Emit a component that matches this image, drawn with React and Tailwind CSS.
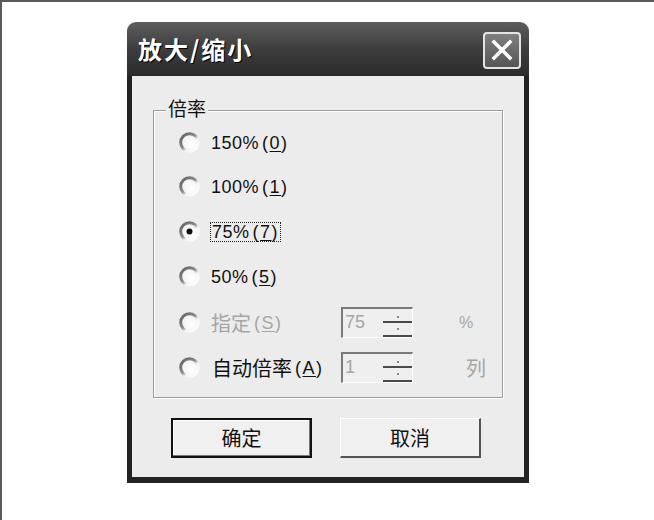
import React from 'react'

const cjk = { fontFamily: '"Noto Sans CJK SC", "Liberation Sans", sans-serif' }
const lat = { fontFamily: '"Liberation Sans", "Noto Sans CJK SC", sans-serif' }

function Radio({ checked }) {
  return (
    <svg width="21" height="21" viewBox="0 0 21 21" className="shrink-0">
      <defs>
        <linearGradient id="rg" x1="0" y1="0" x2="1" y2="1">
          <stop offset="0" stopColor="#5f5f5f" />
          <stop offset="0.45" stopColor="#8a8a8a" />
          <stop offset="0.62" stopColor="#f4f4f4" />
          <stop offset="1" stopColor="#ffffff" />
        </linearGradient>
        <radialGradient id="rf" cx="0.6" cy="0.6" r="0.6">
          <stop offset="0" stopColor="#ffffff" />
          <stop offset="1" stopColor="#f1f1f1" />
        </radialGradient>
      </defs>
      <circle cx="10.5" cy="10.5" r="8.8" fill="url(#rf)" stroke="url(#rg)" strokeWidth="3" />
      {checked && <circle cx="10.5" cy="10.5" r="3" fill="#111" />}
    </svg>
  )
}

function Label({ zh, key1, num, disabled, focus }) {
  const color = disabled ? 'text-[#a6a6a6]' : 'text-[#111]'
  return (
    <span className={`flex items-center ${color} ${focus ? 'outline outline-1 outline-dotted outline-[#222] px-[1px]' : ''}`}>
      {zh && <span style={cjk} className="text-[20px] leading-none">{zh}</span>}
      {num && <span style={lat} className="text-[18px] leading-none tracking-[0.5px]">{num}</span>}
      <span style={lat} className="text-[18px] leading-none ml-[3px] tracking-[1.5px]">
        (<span className="underline underline-offset-2">{key1}</span>)
      </span>
    </span>
  )
}

function Spin({ value }) {
  return (
    <div className="flex w-[72px] h-[31px] border-t-2 border-l-2 border-[#7a7a7a] border-b border-r border-b-white border-r-white bg-[#efefef]">
      <span style={lat} className="flex-1 text-[18px] text-[#a6a6a6] leading-[27px] pl-[2px]">{value}</span>
      <div className="w-[29px] flex flex-col border-b-2 border-[#4a4a4a]">
        <div className="flex-1 flex items-center justify-center border-b-2 border-[#4a4a4a]">
          <span className="w-[2px] h-[2px] bg-[#888] mt-1" />
        </div>
        <div className="flex-1 flex items-center justify-center">
          <span className="w-[2px] h-[2px] bg-[#888]" />
        </div>
      </div>
    </div>
  )
}

export default function App() {
  return (
    <div className="w-[654px] h-[520px] bg-white border-t-2 border-l-2 border-[#5a5a5a] overflow-hidden">
      <div className="ml-[125px] mt-[20px] w-[402px] flex flex-col">
        <div className="h-[54px] rounded-t-[9px] bg-gradient-to-b from-[#5e5e5e] via-[#3d3d3d] to-[#2b2b2b] flex items-center justify-between pl-[11px] pr-[8px]">
          <span style={cjk} className="text-[24px] font-bold tracking-[2px] text-white leading-none [text-shadow:1px_1px_0_#000]">放大/缩小</span>
          <div className="w-[38px] h-[37px] mt-[2px] rounded-[4px] border-2 border-[#e4e4e4] bg-gradient-to-b from-[#808080] to-[#555] flex items-center justify-center">
            <svg width="22" height="22" viewBox="0 0 22 22">
              <path d="M3 3 L19 19 M19 3 L3 19" stroke="#fff" strokeWidth="3.5" strokeLinecap="square" />
            </svg>
          </div>
        </div>
        <div className="h-[407px] bg-[#ececec] border-x-[5px] border-b-[6px] border-[#232323] flex flex-col">
          <div className="relative ml-[21px] mt-[34px] w-[350px] h-[288px] border border-[#9c9c9c] shadow-[inset_1px_1px_0_#fff,1px_1px_0_#fff]">
            <span style={cjk} className="absolute left-[12px] -top-[13px] px-[2px] bg-[#ececec] text-[19px] leading-none text-[#111]">倍率</span>
            <div className="flex flex-col pl-[25px] pt-[21px]">
              <div className="h-[21px] flex items-center gap-[11px]"><Radio /><Label num="150%" key1="0" /></div>
              <div className="h-[21px] mt-[23px] flex items-center gap-[11px]"><Radio /><Label num="100%" key1="1" /></div>
              <div className="h-[21px] mt-[24px] flex items-center gap-[11px]"><Radio checked /><Label num="75%" key1="7" focus /></div>
              <div className="h-[21px] mt-[24px] flex items-center gap-[11px]"><Radio /><Label num="50%" key1="5" /></div>
              <div className="h-[21px] mt-[25px] flex items-center">
                <Radio />
                <span className="w-[130px] ml-[11px]"><Label zh="指定" key1="S" disabled /></span>
                <Spin value="75" />
                <span style={lat} className="ml-[46px] text-[16px] text-[#a6a6a6]">%</span>
              </div>
              <div className="h-[21px] mt-[24px] flex items-center">
                <Radio />
                <span className="w-[129px] ml-[12px]"><Label zh="自动倍率" key1="A" /></span>
                <Spin value="1" />
                <span style={cjk} className="ml-[53px] text-[20px] text-[#a6a6a6] leading-none">列</span>
              </div>
            </div>
          </div>
          <div className="flex ml-[39px] mt-[20px] gap-[28px]">
            <button style={cjk} className="w-[141px] h-[40px] bg-[#f0f0f0] border-2 border-[#111] shadow-[inset_-1px_-1px_0_#777,inset_1px_1px_0_#fff] text-[20px] text-[#111] leading-none">确定</button>
            <button style={cjk} className="w-[141px] h-[40px] bg-[#f0f0f0] border-t border-l border-white border-b-2 border-r-2 border-b-[#555] border-r-[#555] text-[20px] text-[#111] leading-none">取消</button>
          </div>
        </div>
      </div>
    </div>
  )
}
